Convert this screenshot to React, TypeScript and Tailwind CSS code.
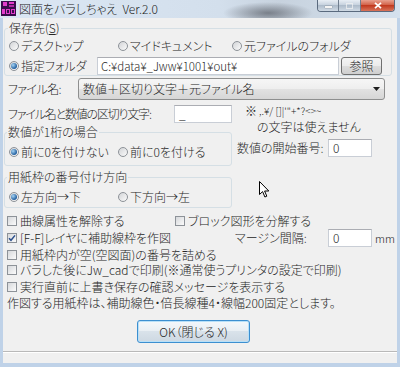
import React from "react";

function Radio({ checked = false }: { checked?: boolean }) {
  return (
    <span className="flex h-[10px] w-[10px] shrink-0 items-center justify-center rounded-full border border-[#8d9298] bg-[linear-gradient(135deg,#d2d4d7,#fbfbfb)]">
      {checked && (
        <span className="h-[6px] w-[6px] rounded-full bg-[radial-gradient(circle_at_35%_35%,#a6d4f4,#1f5d9e_70%)]" />
      )}
    </span>
  );
}

function Check({ checked = false }: { checked?: boolean }) {
  return (
    <span className="flex h-[10px] w-[10px] shrink-0 items-center justify-center border border-[#8d9298] bg-[linear-gradient(135deg,#d6d8db,#fbfbfb)]">
      {checked && (
        <svg width="8" height="8" viewBox="0 0 8 8">
          <path d="M1 4.2 L3 6.3 L7 1.4" stroke="#2b4f8c" strokeWidth="1.5" fill="none" />
        </svg>
      )}
    </span>
  );
}

function Opt({ checked, label, w }: { checked?: boolean; label: string; w?: string }) {
  return (
    <div className={`flex items-center gap-[2px] ${w ?? ""}`}>
      <Radio checked={checked} />
      <span>{label}</span>
    </div>
  );
}

function Box({ checked, label }: { checked?: boolean; label: React.ReactNode }) {
  return (
    <div className="flex items-center gap-[3px]">
      <Check checked={checked} />
      <span className="whitespace-nowrap">{label}</span>
    </div>
  );
}

export default function App() {
  return (
    <div className="relative h-[367px] w-[400px] overflow-hidden bg-[#bfd2e8] font-['Noto_Sans_CJK_JP','Noto_Sans',sans-serif] text-[12px] font-light leading-[16px] text-[#262626] [font-feature-settings:'palt']">
      {/* title bar */}
      <div className="flex h-[18px] items-start bg-[radial-gradient(ellipse_45px_11px_at_268px_13px,rgba(55,58,66,0.55),transparent),linear-gradient(90deg,#dbe7f4,#d3dfec_55%,#c7d2de_70%,#d5e1ee)]">
        <svg width="15" height="15" viewBox="0 0 15 15" className="ml-[1px] mt-[1px]">
          <rect width="15" height="15" fill="#3a0d4c" />
          <rect x="2" y="1" width="4" height="4" fill="#e23ccc" />
          <rect x="8" y="1" width="5" height="2" fill="#e23ccc" />
          <rect x="8" y="4" width="5" height="2" fill="#b02aa4" />
          <rect x="1" y="8" width="3" height="5" fill="#e23ccc" />
          <rect x="5" y="8" width="4" height="5" fill="#e23ccc" />
          <rect x="6" y="9" width="2" height="3" fill="#3a0d4c" />
          <rect x="10" y="8" width="4" height="5" fill="#e23ccc" />
          <rect x="11" y="9" width="2" height="3" fill="#3a0d4c" />
        </svg>
        <span className="ml-[3px] mt-[1px] whitespace-nowrap text-[#222]">図面をバラしちゃえ&nbsp;&nbsp;Ver.2.0</span>
        <div className="ml-auto mr-[5px] flex h-[12px] overflow-hidden rounded-b-[4px] border border-t-0 border-[#5a6a7e]">
          <div className="flex w-[21px] items-center justify-center border-r border-[#6f7d8e] bg-[linear-gradient(#e8eef5,#c3cfdc_50%,#aebccb_50%,#d0dae5)]">
            <span className="mt-[2px] h-[2px] w-[7px] bg-[#f4f4f4] shadow-[0_0_1px_#333]" />
          </div>
          <div className="flex w-[22px] items-center justify-center border-r border-[#6f7d8e] bg-[linear-gradient(#e8eef5,#c3cfdc_50%,#aebccb_50%,#d0dae5)]">
            <span className="h-[6px] w-[7px] border border-[#f4f4f4] opacity-70" />
          </div>
          <div className="flex w-[33px] items-center justify-center bg-[linear-gradient(#e8a08f,#cf5a40_50%,#c13a20_50%,#d8735a)]">
            <svg width="8" height="7" viewBox="0 0 8 7">
              <path d="M1 0.8 L7 6.2 M7 0.8 L1 6.2" stroke="#ffffff" strokeWidth="1.8" />
            </svg>
          </div>
        </div>
      </div>

      {/* client area */}
      <div className="mx-[3px] flex h-[345px] flex-col bg-[#f0f0f0]">
        {/* 保存先 */}
        <fieldset className="ml-[1px] mt-[2px] w-[388px] rounded-[3px] border border-[#d5dfe5]">
          <legend className="ml-[3px] px-[1px] leading-[16px]">
            保存先(<span className="underline">S</span>)
          </legend>
          <div className="mt-[2px] flex h-[16px] items-center pl-[4px]">
            <Opt label="デスクトップ" w="w-[109px]" />
            <Opt label="マイドキュメント" w="w-[114px]" />
            <Opt label="元ファイルのフォルダ" />
          </div>
          <div className="mt-[3px] flex h-[18px] items-center pl-[4px]">
            <Opt checked label="指定フォルダ" w="w-[88px]" />
            <div className="flex h-[18px] w-[242px] items-center border border-[#c9ced6] border-t-[#abadb3] bg-white pl-[3px] text-[11.5px]">
              C:¥data¥_Jww¥1001¥out¥
            </div>
            <div className="ml-[2px] flex h-[18px] w-[41px] items-center justify-center rounded-[3px] border border-[#707070] bg-[linear-gradient(#f4f4f4,#ebebeb_50%,#dddddd_50%,#cfcfcf)]">
              参照
            </div>
          </div>
        </fieldset>

        {/* ファイル名 */}
        <div className="mt-[2px] flex h-[22px] items-center pl-[5px]">
          <span className="w-[70px] tracking-[-0.6px]">ファイル名:</span>
          <div className="flex h-[22px] w-[307px] items-center justify-between rounded-[3px] border border-[#8e8f8f] bg-[linear-gradient(#f6f6f6,#eeeeee_50%,#e2e2e2_50%,#d6d6d6)] pl-[4px] pr-[4px]">
            <span>数値＋区切り文字＋元ファイル名</span>
            <svg width="7" height="4" viewBox="0 0 7 4">
              <path d="M0 0 H7 L3.5 4 Z" fill="#1e1e1e" />
            </svg>
          </div>
        </div>

        {/* two columns */}
        <div className="mt-[3px] flex">
          <div className="ml-[1px] flex w-[228px] flex-col">
            <div className="mt-[2px] flex h-[18px] items-center pl-[4px]">
              <span className="w-[166px] whitespace-nowrap tracking-[-1.2px]">ファイル名と数値の区切り文字:</span>
              <div className="flex h-[18px] w-[58px] items-center border border-[#c9ced6] border-t-[#abadb3] bg-white pl-[4px]">
                _
              </div>
            </div>
            <fieldset className="mt-[1px] rounded-[3px] border border-[#d5dfe5] pb-[5px]">
              <legend className="ml-[2px] px-[1px] leading-[16px]">数値が1桁の場合</legend>
              <div className="mt-[4px] flex h-[16px] items-center pl-[4px]">
                <Opt checked label="前に0を付けない" w="w-[109px]" />
                <Opt label="前に0を付ける" />
              </div>
            </fieldset>
            <fieldset className="mt-[3px] rounded-[3px] border border-[#d5dfe5] pb-[2px]">
              <legend className="ml-[2px] px-[1px] leading-[16px]">用紙枠の番号付け方向</legend>
              <div className="mt-[4px] flex h-[16px] items-center pl-[4px]">
                <Opt checked label="左方向→下" w="w-[109px]" />
                <Opt label="下方向→左" />
              </div>
            </fieldset>
          </div>
          <div className="ml-[5px] flex flex-col">
            <div className="flex h-[16px] items-center pl-[8px]">
              <span>※</span>
              <span className="ml-[2px] text-[10px]">,.¥/ []|'"+*?&lt;&gt;~</span>
            </div>
            <div className="h-[16px] pl-[20px]">の文字は使えません</div>
            <div className="mt-[4px] flex h-[18px] items-center">
              <span className="w-[91px]">数値の開始番号:</span>
              <div className="flex h-[18px] w-[44px] items-center border border-[#c9ced6] border-t-[#abadb3] bg-white pl-[4px]">
                0
              </div>
            </div>
          </div>
        </div>

        {/* checkboxes */}
        <div className="mt-[5px] flex h-[16px] items-center pl-[4px]">
          <div className="w-[168px]">
            <Box label="曲線属性を解除する" />
          </div>
          <Box label="ブロック図形を分解する" />
        </div>
        <div className="flex h-[18px] items-center pl-[4px]">
          <div className="w-[228px]">
            <Box checked label="[F-F]レイヤに補助線枠を作図" />
          </div>
          <span className="w-[93px]">マージン間隔:</span>
          <div className="flex h-[18px] w-[44px] items-center border border-[#c9ced6] border-t-[#abadb3] bg-white pl-[4px]">
            0
          </div>
          <span className="ml-[3px] text-[11px]">mm</span>
        </div>
        <div className="flex h-[15px] items-center pl-[4px]">
          <Box label="用紙枠内が空(空図面)の番号を詰める" />
        </div>
        <div className="flex h-[16px] items-center pl-[4px]">
          <Box label="バラした後にJw_cadで印刷(※通常使うプリンタの設定で印刷)" />
        </div>
        <div className="mt-[1px] flex h-[16px] items-center pl-[4px]">
          <Box label="実行直前に上書き保存の確認メッセージを表示する" />
        </div>
        <div className="flex h-[16px] items-center whitespace-nowrap pl-[4px]">
          作図する用紙枠は、補助線色・倍長線種4・線幅200固定とします。
        </div>

        <div className="ml-[134px] mt-[9px] flex h-[23px] w-[113px] items-center justify-center rounded-[3px] border border-[#3c8fd0] bg-[linear-gradient(#f4f8fb,#e8eef3_50%,#d9e2ea_50%,#cdd8e2)] shadow-[inset_0_0_0_1px_#b8e0f8]">
          OK（閉じる X)
        </div>

        <div className="mt-[8px] flex-1 border-t border-[#b9b9b9] shadow-[inset_0_1px_0_#ffffff]" />
      </div>

      {/* mouse pointer */}
      <svg width="12" height="18" viewBox="0 0 12 18" className="absolute left-[259px] top-[181px]">
        <path d="M0.5 0.5 L0.5 13.5 L3.6 10.6 L5.9 16 L7.8 15.2 L5.6 10 L9.8 10 Z" fill="#ffffff" stroke="#000000" strokeWidth="1" />
      </svg>
    </div>
  );
}
